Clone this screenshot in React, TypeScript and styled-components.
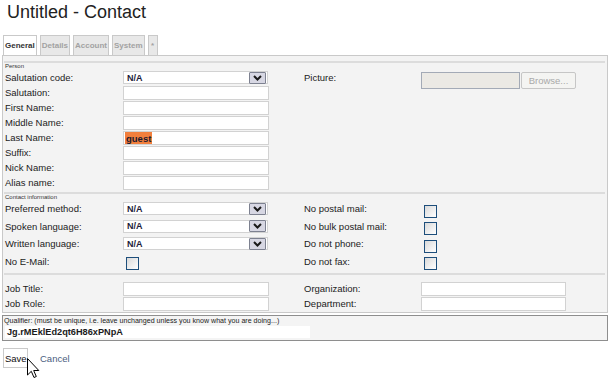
import React from "react";
import styled, { createGlobalStyle } from "styled-components";

const Global = createGlobalStyle`
  html, body { margin: 0; padding: 0; background: #fff; }
  body { font-family: "Liberation Sans", Arial, sans-serif; color: #1b1b1b; }
`;

const Page = styled.div`
  width: 611px;
  height: 382px;
  overflow: hidden;
  position: relative;
`;

const Title = styled.h1`
  margin: 0 0 13px 0;
  padding: 2px 0 0 7px;
  height: 20px;
  font-size: 18px;
  line-height: 20px;
  font-weight: normal;
  color: #222;
`;

const TabStrip = styled.div`
  display: flex;
  gap: 3px;
  height: 20px;
  padding-left: 3px;
`;

const Tab = styled.div<{ $active?: boolean }>`
  display: flex;
  align-items: center;
  justify-content: center;
  min-width: 6px;
  padding: 0 1px;
  border: 1px solid #c9c9c9;
  border-bottom: none;
  background: ${(p) => (p.$active ? "#ffffff" : "#e8e8e8")};
  color: ${(p) => (p.$active ? "#333" : "#a2a2a2")};
  font-size: 8px;
  font-weight: bold;
`;

const Panel = styled.div`
  margin: 0 3px 0 2px;
  border: 1px solid #c9c9c9;
  background: #f3f3f3;
  padding: 5px 0 1px 0;
`;

const Section = styled.div<{ $pt?: number; $pb?: number }>`
  margin: 0 2px 0 1px;
  border-top: 2px solid #dcdcdc;
  padding-top: ${(p) => p.$pt ?? 0}px;
  padding-bottom: ${(p) => p.$pb ?? 0}px;
`;

const Legend = styled.div<{ $h: number }>`
  font-size: 6px;
  line-height: ${(p) => p.$h}px;
  height: ${(p) => p.$h}px;
  padding-left: 1px;
  color: #333;
`;

const Columns = styled.div`
  display: flex;
  padding-left: 1px;
`;

const Column = styled.div<{ $w?: number }>`
  display: flex;
  flex-direction: column;
  width: ${(p) => (p.$w ? `${p.$w}px` : "auto")};
  flex: ${(p) => (p.$w ? "none" : "1")};
`;

const Row = styled.div<{ $h: number }>`
  display: flex;
  align-items: center;
  height: ${(p) => p.$h}px;
`;

const Label = styled.div<{ $w: number }>`
  width: ${(p) => p.$w}px;
  flex: none;
  font-size: 9.5px;
  line-height: 11px;
  white-space: nowrap;
  color: #1b1b1b;
`;

const TextBox = styled.div<{ $w?: number; $h?: number }>`
  align-self: flex-end;
  box-sizing: border-box;
  width: ${(p) => p.$w ?? 146}px;
  height: ${(p) => p.$h ?? 14}px;
  background: #fff;
  border: 1px solid #d2d2d2;
  padding: 0 1px;
  display: flex;
  align-items: stretch;
  font-size: 9.5px;
  font-weight: bold;
  color: #1a1a2e;
`;

const Selected = styled.span`
  background: #f27f3d;
  display: flex;
  align-items: center;
  padding: 0 1px;
`;

const SelectBox = styled.div`
  box-sizing: border-box;
  width: 145px;
  height: 13px;
  background: #fff;
  border: 1px solid #d2d2d2;
  display: flex;
  align-items: center;
  justify-content: space-between;
  padding-left: 3px;
  font-size: 9px;
  font-weight: bold;
  color: #1c1c3a;
`;

const DropButton = styled.div`
  box-sizing: border-box;
  width: 17px;
  height: 12px;
  margin-right: 1px;
  border: 1px solid #7d8190;
  border-radius: 1px;
  background: #d7d7e3;
  display: flex;
  align-items: center;
  justify-content: center;
`;

const CheckBox = styled.div`
  align-self: flex-end;
  box-sizing: border-box;
  width: 13px;
  height: 13px;
  margin-left: 3px;
  border: 1px solid #1d4e7b;
  background: linear-gradient(135deg, #d9d9d9 0%, #f4f4f4 70%, #fff 100%);
`;

const FileBox = styled.div`
  box-sizing: border-box;
  width: 99px;
  height: 17px;
  background: #ebe9e4;
  border: 1px solid #a3aab6;
`;

const BrowseButton = styled.div`
  box-sizing: border-box;
  width: 55px;
  height: 17px;
  margin-left: 1px;
  border: 1px solid #c6c6c6;
  border-radius: 2px;
  background: #f4f4f2;
  color: #a9a9a9;
  font-size: 9.5px;
  display: flex;
  align-items: center;
  justify-content: center;
`;

const PictureRow = styled.div`
  display: flex;
  align-items: flex-start;
  height: 17px;
  margin-top: 2px;
`;

const QualifierBox = styled.div`
  margin: 2px 3px 0 2px;
  border: 1px solid #8e8e8e;
  background: #f4f4f4;
  height: 23px;
  padding: 1px 0 0 1px;
`;

const QualifierLabel = styled.div`
  font-size: 7.1px;
  line-height: 8px;
  height: 8px;
  color: #222;
  white-space: nowrap;
`;

const QualifierValue = styled.div`
  width: 303px;
  height: 12px;
  margin-left: 1px;
  margin-top: 1px;
  background: #fff;
  font-size: 9.2px;
  font-weight: bold;
  line-height: 12px;
  padding-left: 2px;
  color: #1a1a1a;
`;

const Actions = styled.div`
  position: relative;
  display: flex;
  align-items: center;
  margin-top: 7px;
  padding-left: 3px;
  height: 20px;
`;

const SaveButton = styled.div`
  box-sizing: border-box;
  width: 25px;
  height: 20px;
  border: 1px solid #cacaca;
  background: #fff;
  font-size: 9.5px;
  color: #111;
  display: flex;
  align-items: center;
  padding-left: 1px;
`;

const CancelLink = styled.span`
  margin-left: 12px;
  font-size: 9.5px;
  color: #4a5d80;
`;

const Cursor = styled.svg`
  position: absolute;
  left: 27px;
  top: 10px;
`;

const Chevron = () => (
  <svg width="9" height="6" viewBox="0 0 9 6">
    <path d="M1 1 L4.5 4.5 L8 1" stroke="#1a1a1a" strokeWidth="2" fill="none" />
  </svg>
);

const Select = ({ value }: { value: string }) => (
  <SelectBox>
    <span>{value}</span>
    <DropButton>
      <Chevron />
    </DropButton>
  </SelectBox>
);

const personRows: { label: string; kind: "select" | "text"; value?: string }[] = [
  { label: "Salutation code:", kind: "select", value: "N/A" },
  { label: "Salutation:", kind: "text" },
  { label: "First Name:", kind: "text" },
  { label: "Middle Name:", kind: "text" },
  { label: "Last Name:", kind: "text", value: "guest" },
  { label: "Suffix:", kind: "text" },
  { label: "Nick Name:", kind: "text" },
  { label: "Alias name:", kind: "text" },
];

const contactLeft: { label: string; kind: "select" | "check" }[] = [
  { label: "Preferred method:", kind: "select" },
  { label: "Spoken language:", kind: "select" },
  { label: "Written language:", kind: "select" },
  { label: "No E-Mail:", kind: "check" },
];

const contactRight = ["No postal mail:", "No bulk postal mail:", "Do not phone:", "Do not fax:"];

const tabs = ["General", "Details", "Account", "System", "*"];

export default function App() {
  return (
    <Page>
      <Global />
      <Title>Untitled - Contact</Title>
      <TabStrip>
        {tabs.map((t, i) => (
          <Tab key={t} $active={i === 0}>
            {t}
          </Tab>
        ))}
      </TabStrip>
      <Panel>
        <Section $pb={2}>
          <Legend $h={7}>Person</Legend>
          <Columns>
            <Column $w={299}>
              {personRows.map((r) => (
                <Row key={r.label} $h={15}>
                  <Label $w={118}>{r.label}</Label>
                  {r.kind === "select" ? (
                    <Select value={r.value ?? ""} />
                  ) : (
                    <TextBox>{r.value ? <Selected>{r.value}</Selected> : null}</TextBox>
                  )}
                </Row>
              ))}
            </Column>
            <Column>
              <PictureRow>
                <Label $w={117}>Picture:</Label>
                <FileBox />
                <BrowseButton>Browse...</BrowseButton>
              </PictureRow>
            </Column>
          </Columns>
        </Section>
        <Section $pb={3}>
          <Legend $h={6}>Contact information</Legend>
          <Columns>
            <Column $w={299}>
              {contactLeft.map((r) => (
                <Row key={r.label} $h={17.5}>
                  <Label $w={118}>{r.label}</Label>
                  {r.kind === "select" ? <Select value="N/A" /> : <CheckBox />}
                </Row>
              ))}
            </Column>
            <Column>
              {contactRight.map((l) => (
                <Row key={l} $h={17.5}>
                  <Label $w={117}>{l}</Label>
                  <CheckBox />
                </Row>
              ))}
            </Column>
          </Columns>
        </Section>
        <Section $pt={6}>
          <Columns>
            <Column $w={299}>
              <Row $h={15}>
                <Label $w={118}>Job Title:</Label>
                <TextBox />
              </Row>
              <Row $h={15}>
                <Label $w={118}>Job Role:</Label>
                <TextBox />
              </Row>
            </Column>
            <Column>
              <Row $h={15}>
                <Label $w={117}>Organization:</Label>
                <TextBox $w={145} />
              </Row>
              <Row $h={15}>
                <Label $w={117}>Department:</Label>
                <TextBox $w={145} />
              </Row>
            </Column>
          </Columns>
        </Section>
      </Panel>
      <QualifierBox>
        <QualifierLabel>
          Qualifier: (must be unique, i.e. leave unchanged unless you know what you are doing...)
        </QualifierLabel>
        <QualifierValue>Jg.rMEklEd2qt6H86xPNpA</QualifierValue>
      </QualifierBox>
      <Actions>
        <SaveButton>Save</SaveButton>
        <CancelLink>Cancel</CancelLink>
        <Cursor width="13" height="21" viewBox="0 0 13 21">
          <path
            d="M0.5 0.5 L0.5 17 L4.3 13.3 L7 19.5 L9.3 18.5 L6.7 12.5 L11.8 12.5 Z"
            fill="#fff"
            stroke="#000"
            strokeWidth="1"
            strokeLinejoin="miter"
          />
        </Cursor>
      </Actions>
    </Page>
  );
}
